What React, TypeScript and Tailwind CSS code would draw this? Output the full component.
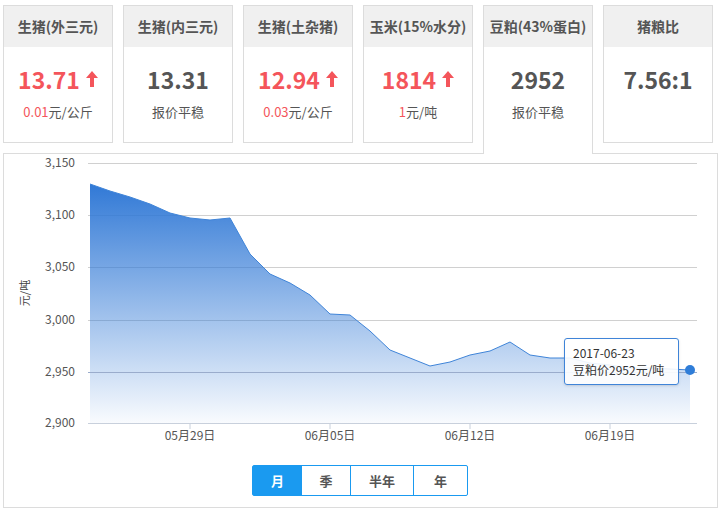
const cards = [
  { title: "生猪(外三元)", value: "13.71", up: true, sub: "0.01", unit: "元/公斤" },
  { title: "生猪(内三元)", value: "13.31", up: false, sub: "", unit: "报价平稳" },
  { title: "生猪(土杂猪)", value: "12.94", up: true, sub: "0.03", unit: "元/公斤" },
  { title: "玉米(15%水分)", value: "1814", up: true, sub: "1", unit: "元/吨" },
  { title: "豆粕(43%蛋白)", value: "2952", up: false, sub: "", unit: "报价平稳", active: true },
  { title: "猪粮比", value: "7.56:1", up: false, sub: "", unit: "" },
];

// y pixel per day, page coordinates; chart svg starts at page (4,154)
const ys = [184, 191, 197, 204, 213, 218, 220, 218, 254, 274, 283, 295, 314, 315, 331, 350, 358, 366, 362, 355, 351, 342, 355, 358, 358, 363, 365, 368, 368, 369, 370];

function Arrow() {
  return (
    <svg width="12" height="16" viewBox="0 0 12 16" className="ml-1.5">
      <path d="M6 0 L12 7 L8 7 L8 16 L4 16 L4 7 L0 7 Z" fill="#f4555b" />
    </svg>
  );
}

function Chart() {
  const off = 154;
  const dx = 4;
  const pts = ys.map((y, i) => [90 + i * 20 - dx, y - off]);
  const line = pts.map((p) => p.join(",")).join(" ");
  const area = `${90 - dx},${423 - off} ${line} ${690 - dx},${423 - off}`;
  const grid = [163, 215, 267, 320, 372, 423];
  const labels = ["3,150", "3,100", "3,050", "3,000", "2,950", "2,900"];
  return (
    <svg width="714" height="290" className="block">
      <defs>
        <linearGradient id="g" x1="0" y1="0" x2="0" y2="1">
          <stop offset="0" stopColor="#3179d6" />
          <stop offset="1" stopColor="#3179d6" stopOpacity="0.03" />
        </linearGradient>
      </defs>
      {grid.map((g, i) => (
        <g key={g}>
          <line x1={88 - dx} x2={697 - dx} y1={g - off + 0.5} y2={g - off + 0.5} stroke={i === 5 ? "#c8d0dc" : "#d0d0d0"} />
          <text x={75 - dx} y={g - off + 4} textAnchor="end" fontSize="12" fill="#555">{labels[i]}</text>
        </g>
      ))}
      <polygon points={area} fill="url(#g)" />
      <polyline points={line} fill="none" stroke="#3f84d8" strokeWidth="1" />
      <line x1={88 - dx} x2={697 - dx} y1={372 - off + 0.5} y2={372 - off + 0.5} stroke="#9aaccc" />
      {[190, 330, 470, 610].map((x, i) => (
        <g key={x}>
          <line x1={x - dx} x2={x - dx} y1={423 - off} y2={429 - off} stroke="#c8d0dc" />
          <text x={x - dx} y={440 - off} textAnchor="middle" fontSize="12" fill="#555">{["05月29日", "06月05日", "06月12日", "06月19日"][i]}</text>
        </g>
      ))}
      <text transform={`translate(${29 - dx},${293 - off}) rotate(-90)`} textAnchor="middle" fontSize="11" fill="#444">元/吨</text>
      <circle cx={690 - dx} cy={370 - off} r="5" fill="#2f7dd8" />
    </svg>
  );
}

export default function App() {
  return (
    <div className="w-[723px] h-[513px] bg-white relative" style={{ fontFamily: '"Microsoft YaHei","Noto Sans CJK SC",sans-serif' }}>
      <div className="flex gap-[10px] pl-[3px] pt-[5px]">
        {cards.map((c) => (
          <div
            key={c.title}
            className={`w-[110px] border border-[#dcdcdc] bg-white ${c.active ? "h-[149px] border-b-0 relative z-10" : "h-[138px]"}`}
          >
            <div className="h-[41px] bg-[#f0f0f0] flex items-center justify-center text-[14px] font-bold text-[#555]">{c.title}</div>
            <div className="flex flex-col items-center pt-[17px]">
              <div className={`flex items-center text-[23px] font-bold leading-[30px] ${c.up ? "text-[#f4555b]" : "text-[#555]"}`}>
                {c.value}
                {c.up && <Arrow />}
              </div>
              <div className="text-[13px] text-[#555] mt-[8px]">
                {c.sub && <span className="text-[#f4555b]">{c.sub}</span>}
                {c.unit}
              </div>
            </div>
          </div>
        ))}
      </div>
      <div className="absolute left-[3px] top-[153px] w-[715px] h-[355px] border border-[#dcdcdc]">
        <Chart />
        <div className="absolute left-[560px] top-[184px] w-[115px] h-[47px] bg-white/90 border border-[#3f84d8] rounded-[3px] shadow px-2 pt-[5px] text-[12px] leading-[17px] text-[#333]">
          <div>2017-06-23</div>
          <div>豆粕价2952元/吨</div>
        </div>
        <div className="absolute left-[248px] top-[311px] flex h-[31px] border border-[#1a9af0] rounded-[2px] text-[13px] font-bold text-[#555]">
          <div className="w-[49px] flex items-center justify-center bg-[#1a9af0] text-white">月</div>
          <div className="w-[48px] flex items-center justify-center">季</div>
          <div className="w-[63px] flex items-center justify-center border-l border-[#1a9af0]">半年</div>
          <div className="w-[54px] flex items-center justify-center border-l border-[#1a9af0]">年</div>
        </div>
      </div>
    </div>
  );
}
